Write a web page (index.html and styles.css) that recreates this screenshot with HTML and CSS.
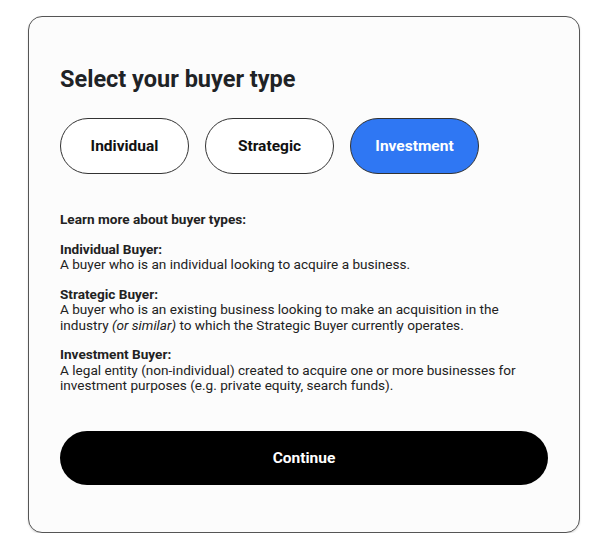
FILE: index.html
```html
<!DOCTYPE html>
<html lang="en">
<head>
    <meta charset="UTF-8">
    <meta name="viewport" content="width=device-width, initial-scale=1.0">
    <title>Select your buyer type</title>
    <link rel="stylesheet" href="styles.css">
</head>
<body>
    <div class="card">
        <h1>Select your buyer type</h1>

        <div class="type-group">
            <button class="type-btn">Individual</button>
            <button class="type-btn">Strategic</button>
            <button class="type-btn active">Investment</button>
        </div>

        <div class="info">
            <p><strong>Learn more about buyer types:</strong></p>
            <p>
                <strong>Individual Buyer:</strong><br>
                A buyer who is an individual looking to acquire a business.
            </p>
            <p>
                <strong>Strategic Buyer:</strong><br>
                A buyer who is an existing business looking to make an acquisition in the industry <em>(or similar)</em> to which the Strategic Buyer currently operates.
            </p>
            <p>
                <strong>Investment Buyer:</strong><br>
                A legal entity (non-individual) created to acquire one or more businesses for investment purposes (e.g. private equity, search funds).
            </p>
        </div>

        <button class="continue-btn">Continue</button>
    </div>
</body>
</html>
```

FILE: styles.css
```css
body {
    margin: 0;
    padding: 16px 30px 0 28px;
    background: #ffffff;
    font-family: Roboto, 'Liberation Sans', sans-serif;
    color: #222;
}

.card {
    width: 552px;
    box-sizing: border-box;
    background: #fcfcfc;
    border: 1px solid #555;
    border-radius: 14px;
    padding: 48px 31px 47px;
    box-shadow: 0 1px 2px rgba(0,0,0,0.15);
}

h1 {
    margin: 0;
    font-size: 23.5px;
    line-height: 28px;
    font-weight: 700;
    color: #1f2326;
}

.type-group {
    display: flex;
    gap: 16px;
    margin-top: 25px;
}

.type-btn {
    width: 129px;
    height: 56px;
    border: 1px solid #333;
    border-radius: 28px;
    background: #fff;
    color: #111;
    font-family: inherit;
    font-size: 15.5px;
    font-weight: 700;
    cursor: pointer;
}

.type-btn.active {
    background: #2f77f3;
    color: #fff;
}

.info {
    margin-top: 38px;
    font-size: 13.6px;
    line-height: 15.5px;
    color: #222;
}

.info p {
    margin: 0 0 14px;
}

.info p:last-child {
    margin-bottom: 0;
}

.continue-btn {
    display: block;
    width: 100%;
    height: 54px;
    margin-top: 37px;
    border: none;
    border-radius: 27px;
    background: #000;
    color: #fff;
    font-family: inherit;
    font-size: 15.5px;
    font-weight: 700;
    cursor: pointer;
}
```
